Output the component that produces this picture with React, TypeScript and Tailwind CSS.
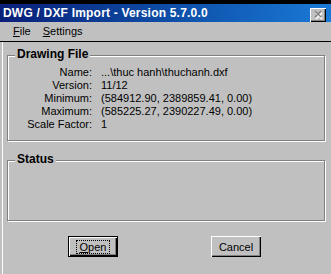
import React from "react";

function GroupBox({ title, className, children }: { title: string; className?: string; children?: React.ReactNode }) {
  return (
    <div
      className={
        "relative border border-[#808080] shadow-[1px_1px_0_#ffffff,inset_1px_1px_0_#ffffff] " + (className ?? "")
      }
    >
      <div className="absolute left-[7px] -top-[9px] px-[2px] bg-[#c0c0c0] text-[12px] leading-[15px] font-bold text-black">
        {title}
      </div>
      {children}
    </div>
  );
}

const rows: [string, string][] = [
  ["Name:", "...\\thuc hanh\\thuchanh.dxf"],
  ["Version:", "11/12"],
  ["Minimum:", "(584912.90, 2389859.41, 0.00)"],
  ["Maximum:", "(585225.27, 2390227.49, 0.00)"],
  ["Scale Factor:", "1"],
];

export default function App() {
  return (
    <div
      className="w-[331px] h-[274px] overflow-hidden bg-[#c0c0c0] flex flex-col text-black"
      style={{ fontFamily: '"Liberation Sans", Arial, sans-serif' }}
    >
      <div className="h-[4px] bg-black shrink-0" />
      <div className="h-[18px] shrink-0 flex items-center pl-[3px] pr-[5px] bg-gradient-to-r from-[#0a1f78] to-[#1a7ad6]">
        <span className="text-white font-bold text-[12px] leading-[14px] tracking-[0.2px]">
          DWG / DXF Import - Version 5.7.0.0
        </span>
        <div className="ml-auto mt-[3px] w-[16px] h-[14px] bg-[#c0c0c0] shadow-[inset_1px_1px_0_#ffffff,inset_-1px_-1px_0_#000000,inset_-2px_-2px_0_#808080] flex items-center justify-center">
          <svg width="8" height="7" viewBox="0 0 8 7" className="overflow-visible">
            <path d="M1 1L7 7M7 1L1 7" stroke="#ffffff" strokeWidth="1.4" transform="translate(1 1)" />
            <path d="M0 0L6 6M6 0L0 6" stroke="#808080" strokeWidth="1.4" transform="translate(1 0)" />
          </svg>
        </div>
      </div>
      <div className="h-[19px] shrink-0 flex items-center text-[11px] leading-[13px]">
        <span className="ml-[13px]">
          <u className="underline-offset-[1px]">F</u>ile
        </span>
        <span className="ml-[12px]">
          <u className="underline-offset-[1px]">S</u>ettings
        </span>
      </div>
      <div className="h-[1px] bg-black shrink-0" />
      <div className="flex-1 ml-[2px] border-l border-white pl-[4px] pr-[6px] pt-[13px] flex flex-col">
        <GroupBox title="Drawing File" className="h-[86px] pt-[10px]">
          <div className="flex flex-col text-[11px] leading-[13px]">
            {rows.map(([k, v]) => (
              <div key={k} className="flex gap-[9px]">
                <span className="w-[84px] text-right">{k}</span>
                <span>{v}</span>
              </div>
            ))}
          </div>
        </GroupBox>
        <GroupBox title="Status" className="mt-[19px] h-[61px]" />
        <div className="flex mt-[15px] pl-[61px]">
          <button className="w-[50px] h-[21px] border border-black bg-[#c0c0c0] shadow-[inset_1px_1px_0_#ffffff,inset_-1px_-1px_0_#000000,inset_-2px_-2px_0_#808080] flex items-center justify-center text-[11px] leading-[12px]">
            <span className="border border-dotted border-black px-[3px] h-[14px] flex items-center">
              <u className="underline-offset-[1px]">O</u>pen
            </span>
          </button>
          <button className="ml-[93px] w-[50px] h-[21px] bg-[#c0c0c0] shadow-[inset_1px_1px_0_#ffffff,inset_-1px_-1px_0_#000000,inset_-2px_-2px_0_#808080] flex items-center justify-center text-[11px] leading-[12px]">
            Cancel
          </button>
        </div>
      </div>
    </div>
  );
}
